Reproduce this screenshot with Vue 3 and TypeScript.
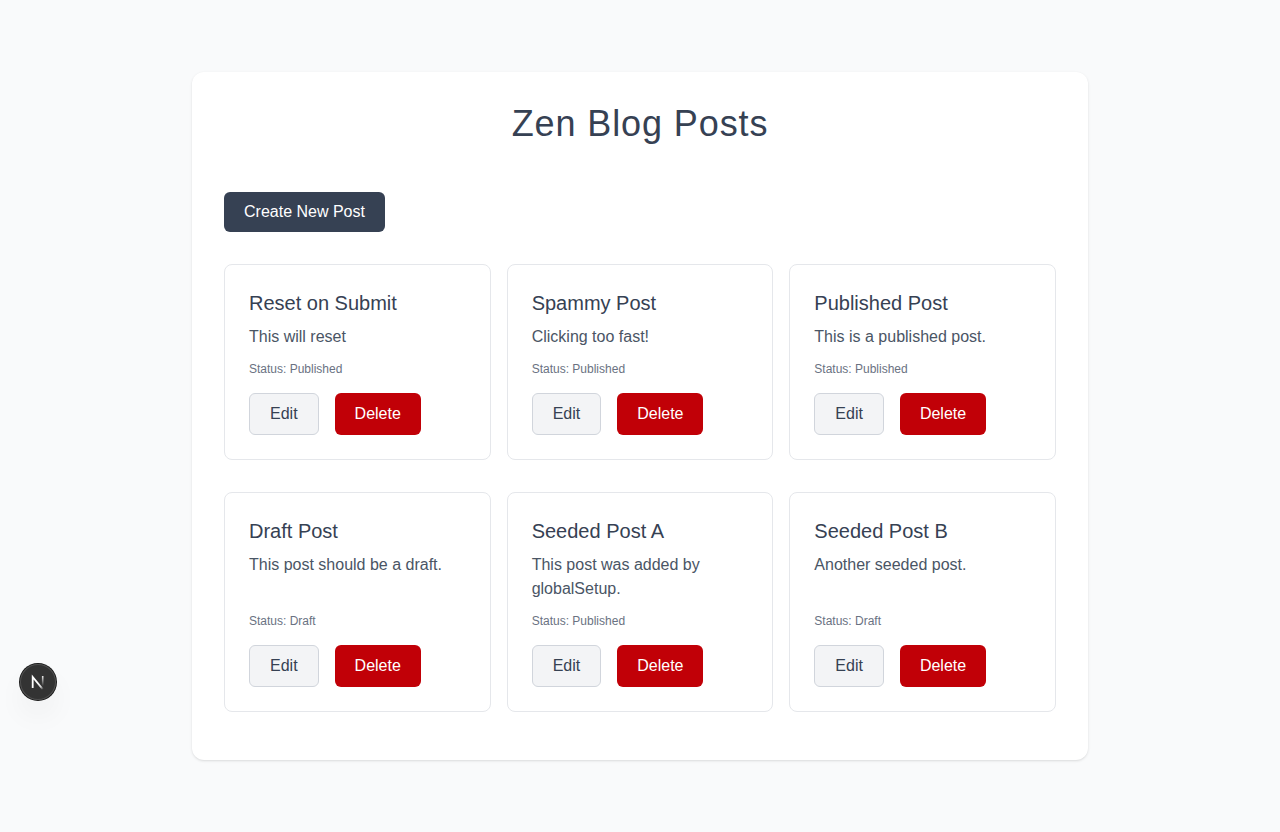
<script setup lang="ts">
interface Post {
  title: string
  content: string
  status: 'Published' | 'Draft'
}

const posts: Post[] = [
  { title: 'Reset on Submit', content: 'This will reset', status: 'Published' },
  { title: 'Spammy Post', content: 'Clicking too fast!', status: 'Published' },
  { title: 'Published Post', content: 'This is a published post.', status: 'Published' },
  { title: 'Draft Post', content: 'This post should be a draft.', status: 'Draft' },
  { title: 'Seeded Post A', content: 'This post was added by globalSetup.', status: 'Published' },
  { title: 'Seeded Post B', content: 'Another seeded post.', status: 'Draft' },
]
</script>

<template>
  <div class="page">
    <main class="panel">
      <h1>Zen Blog Posts</h1>
      <button type="button" class="btn create">Create New Post</button>
      <ul class="posts">
        <li v-for="post in posts" :key="post.title" class="card">
          <div>
            <h2>{{ post.title }}</h2>
            <p class="content">{{ post.content }}</p>
          </div>
          <div>
            <p class="status">Status: {{ post.status }}</p>
            <div class="actions">
              <button type="button" class="btn edit">Edit</button>
              <button type="button" class="btn delete">Delete</button>
            </div>
          </div>
        </li>
      </ul>
    </main>
    <button type="button" class="devtools" aria-label="Open Next.js Dev Tools">
      <svg viewBox="0 0 36 36" fill="none">
        <defs>
          <linearGradient id="diagonal" x1="18" y1="18" x2="23.5" y2="25" gradientUnits="userSpaceOnUse">
            <stop stop-color="#fff" />
            <stop offset="0.6" stop-color="#fff" stop-opacity="0.8" />
            <stop offset="1" stop-color="#fff" stop-opacity="0" />
          </linearGradient>
          <linearGradient id="stem" x1="22.7" y1="12" x2="22.7" y2="22" gradientUnits="userSpaceOnUse">
            <stop stop-color="#fff" stop-opacity="0.9" />
            <stop offset="1" stop-color="#fff" stop-opacity="0" />
          </linearGradient>
        </defs>
        <path d="M12.7 24V13L22.9 25.4" stroke="url(#diagonal)" stroke-width="1.8" />
        <path d="M22.7 12V22" stroke="url(#stem)" stroke-width="1.6" />
      </svg>
    </button>
  </div>
</template>

<style>
body {
  background: #f9fafb;
}
</style>

<style scoped>
.page {
  box-sizing: border-box;
  min-height: 100vh;
  padding: 72px 32px;
  background: #f9fafb;
  color: #364153;
  font-family: "Liberation Sans", Arial, sans-serif;
  font-size: 16px;
  line-height: 24px;
}

.panel {
  box-sizing: border-box;
  max-width: 896px;
  margin: 0 auto;
  padding: 32px 32px 48px;
  border-radius: 12px;
  background: #fff;
  box-shadow: 0 1px 3px rgb(0 0 0 / 10%), 0 1px 2px -1px rgb(0 0 0 / 10%);
}

h1 {
  margin: 0 0 48px;
  font-size: 36px;
  line-height: 40px;
  font-weight: 400;
  letter-spacing: 0.025em;
  text-align: center;
}

.btn {
  padding: 8px 20px;
  border: 0;
  border-radius: 6px;
  color: #fff;
  font: inherit;
  cursor: pointer;
}

.create {
  display: block;
  background: #364153;
}

.posts {
  display: grid;
  grid-template-columns: repeat(3, minmax(0, 1fr));
  gap: 32px 16px;
  margin: 32px 0 0;
  padding: 0;
  list-style: none;
}

.card {
  display: flex;
  flex-direction: column;
  justify-content: space-between;
  padding: 24px;
  border: 1px solid #e5e7eb;
  border-radius: 8px;
}

h2 {
  margin: 0 0 8px;
  font-size: 20px;
  line-height: 28px;
  font-weight: 400;
}

.content {
  margin: 0 0 12px;
  color: #4a5565;
}

.status {
  margin: 0 0 16px;
  color: #6a7282;
  font-size: 12px;
  line-height: 16px;
}

.actions {
  display: flex;
  gap: 16px;
}

.edit {
  border: 1px solid #d1d5dc;
  background: #f3f4f6;
  color: #364153;
}

.delete {
  background: #c10007;
}

.devtools {
  position: fixed;
  bottom: 132px;
  left: 20px;
  width: 36px;
  height: 36px;
  padding: 0;
  border: 0;
  border-radius: 50%;
  background: #333;
  box-shadow: 0 0 0 1px #171717, inset 0 0 0 1px #505050, 0 16px 32px -8px rgb(0 0 0 / 14%);
  cursor: pointer;
}

.devtools svg {
  display: block;
  width: 36px;
  height: 36px;
}
</style>
